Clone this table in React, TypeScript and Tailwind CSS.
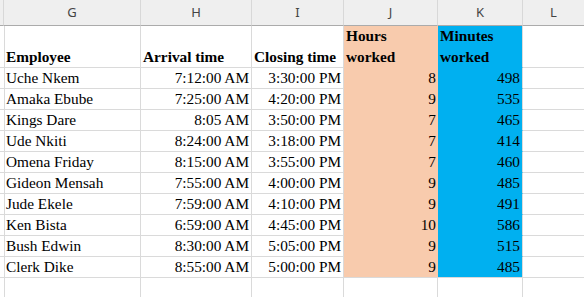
import React from "react";

const rows: [string, string, string, number, number][] = [
  ["Uche Nkem", "7:12:00 AM", "3:30:00 PM", 8, 498],
  ["Amaka Ebube", "7:25:00 AM", "4:20:00 PM", 9, 535],
  ["Kings Dare", "8:05 AM", "3:50:00 PM", 7, 465],
  ["Ude Nkiti", "8:24:00 AM", "3:18:00 PM", 7, 414],
  ["Omena Friday", "8:15:00 AM", "3:55:00 PM", 7, 460],
  ["Gideon Mensah", "7:55:00 AM", "4:00:00 PM", 9, 485],
  ["Jude Ekele", "7:59:00 AM", "4:10:00 PM", 9, 491],
  ["Ken Bista", "6:59:00 AM", "4:45:00 PM", 10, 586],
  ["Bush Edwin", "8:30:00 AM", "5:05:00 PM", 9, 515],
  ["Clerk Dike", "8:55:00 AM", "5:00:00 PM", 9, 485],
];

const grid = "grid grid-cols-[4px_137px_111px_92px_94px_85px_1fr]";
const serif = "font-['Liberation_Serif','Times_New_Roman',serif]";

export default function App() {
  const hdr =
    "h-[26px] bg-[#efefef] border-b border-b-[#ababab] border-r border-r-[#d8d8d8] flex items-center justify-center text-[13px] text-[#444] font-['Segoe_UI','Noto_Sans',sans-serif]";
  const cell =
    "border-r border-b border-[#dadada] flex items-end px-[2px] leading-[20px] text-[15.3px] text-black whitespace-nowrap overflow-hidden";
  return (
    <div className={`w-[584px] h-[297px] overflow-hidden bg-white ${serif}`}>
      {/* column letters */}
      <div className={grid}>
        <div className={hdr}></div>
        <div className={hdr}>G</div>
        <div className={hdr}>H</div>
        <div className={hdr}>I</div>
        <div className={hdr}>J</div>
        <div className={hdr}>K</div>
        <div className={`${hdr} border-r-0`}>L</div>
      </div>
      {/* title row */}
      <div className={grid}>
        <div className={`${cell} h-[42px] px-0`}></div>
        <div className={`${cell} h-[42px] font-bold`}>Employee</div>
        <div className={`${cell} h-[42px] font-bold`}>Arrival time</div>
        <div className={`${cell} h-[42px] font-bold`}>Closing time</div>
        <div className={`${cell} h-[42px] font-bold bg-[#f8cbad] border-[#f8cbad] border-r-0`}>
          <span className="leading-[21px]">
            Hours
            <br />
            worked
          </span>
        </div>
        <div className={`${cell} h-[42px] font-bold bg-[#00b0f0] border-b-[#00b0f0]`}>
          <span className="leading-[21px]">
            Minutes
            <br />
            worked
          </span>
        </div>
        <div className={`${cell} h-[42px] border-r-0`}></div>
      </div>
      {rows.map((r, i) => {
        const last = i === rows.length - 1;
        return (
          <div className={grid} key={i}>
            <div className={`${cell} h-[21px] px-0`}></div>
            <div className={`${cell} h-[21px]`}>{r[0]}</div>
            <div className={`${cell} h-[21px] justify-end`}>{r[1]}</div>
            <div className={`${cell} h-[21px] justify-end`}>{r[2]}</div>
            <div
              className={`${cell} h-[21px] justify-end bg-[#f8cbad] border-r-0 ${
                last ? "border-b-[#dadada]" : "border-b-[#f8cbad]"
              }`}
            >
              {r[3]}
            </div>
            <div
              className={`${cell} h-[21px] justify-end bg-[#00b0f0] ${
                last ? "border-b-[#dadada]" : "border-b-[#00b0f0]"
              }`}
            >
              {r[4]}
            </div>
            <div className={`${cell} h-[21px] border-r-0`}></div>
          </div>
        );
      })}
      <div className={grid}>
        <div className={`${cell} h-[30px] px-0`}></div>
        <div className={`${cell} h-[30px]`}></div>
        <div className={`${cell} h-[30px]`}></div>
        <div className={`${cell} h-[30px]`}></div>
        <div className={`${cell} h-[30px]`}></div>
        <div className={`${cell} h-[30px]`}></div>
        <div className={`${cell} h-[30px] border-r-0`}></div>
      </div>
    </div>
  );
}
